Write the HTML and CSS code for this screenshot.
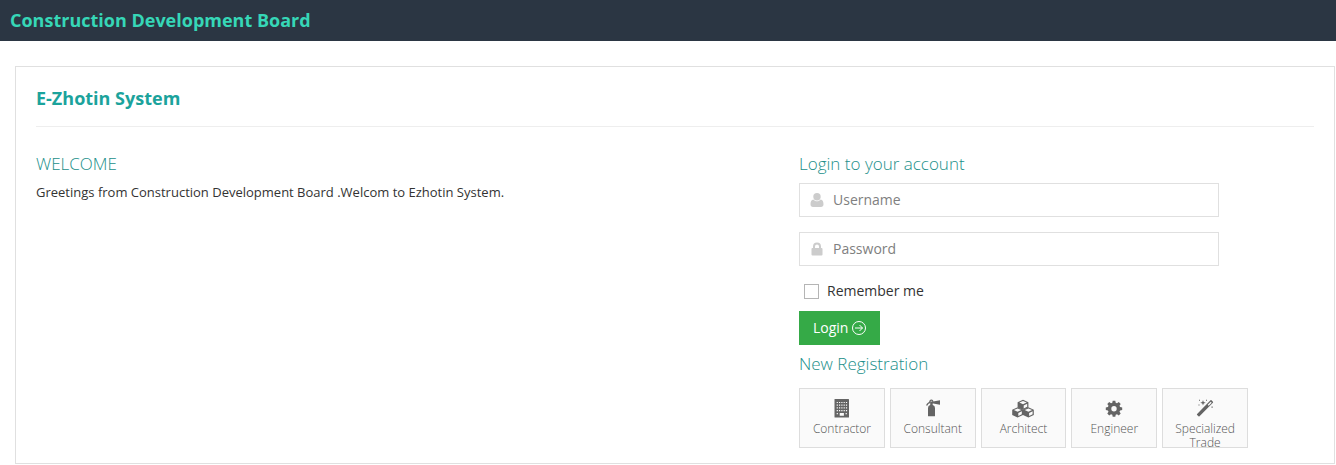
FILE: index.html
```html
<!DOCTYPE html>
<html lang="en">
<head>
<meta charset="utf-8">
<title>E-Zhotin System</title>
<link rel="stylesheet" href="styles.css">
</head>
<body>
<header class="topbar">Construction Development Board</header>
<main class="card">
  <h1 class="card-title">E-Zhotin System</h1>
  <div class="columns">
    <section class="welcome">
      <h2 class="heading">WELCOME</h2>
      <p class="greeting">Greetings from Construction Development Board .Welcom to Ezhotin System.</p>
    </section>
    <section class="account">
      <form class="login">
        <h2 class="heading">Login to your account</h2>
        <label class="field">
          <svg class="field-icon" viewBox="0 0 14 14"><circle cx="7" cy="3.8" r="3.7"/><path d="M3.4 6.4C1.3 6.7.5 8.6.5 11.2.5 13 1.5 14 3 14h8c1.500 0 2.500-1 2.500-2.800 0-2.600-.8-4.500-2.900-4.800C9.700 7.500 8.400 8.200 7 8.200S4.300 7.500 3.400 6.400z"/></svg>
          <input class="input" type="text" placeholder="Username">
        </label>
        <label class="field">
          <svg class="field-icon" viewBox="0 0 14 14"><path fill-rule="evenodd" d="M3 6V4.500a4 4 0 0 1 8 0V6h.6q.9 0 .9.900v5.700q0 .9-.9.900H2.400q-.9 0-.9-.9V6.900Q1.500 6 2.400 6zM5 6h4V4.500a2 2 0 0 0-4 0z"/></svg>
          <input class="input" type="password" placeholder="Password">
        </label>
        <label class="remember"><input class="checkbox" type="checkbox">Remember me</label>
        <button class="login-button" type="button">Login
          <svg class="arrow" viewBox="0 0 14 14"><circle cx="7" cy="7" r="6.500"/><path d="M3 7h7.500M7.500 4l3 3-3 3"/></svg>
        </button>
      </form>
      <h2 class="heading">New Registration</h2>
      <nav class="tiles">
        <a class="tile">
          <svg class="tile-icon" viewBox="0 0 22 19"><path d="M4 0h13.500q.5 0 .5.500v17.500q0 .5-.5.500H4q-.5 0-.5-.5V.5Q3.500 0 4 0z"/><path class="windows" d="M5.700 3.500h10.500M5.700 6.200h10.500M5.700 8.900h10.500M5.700 11.600h10.500"/><path class="face" d="M5.700 14h1.200v1.200H5.700zM14.600 14h1.200v1.200h-1.200zM8.700 14h4.200v2.700H8.700z"/></svg>
          <span>Contractor</span>
        </a>
        <a class="tile">
          <svg class="tile-icon" viewBox="0 0 22 19"><path d="M6 16.800V9q0-2.200 2.200-2.900V4.500h2.500v1.600Q13 6.800 13 9v7.800q0 .5-.5.500h-6q-.5 0-.5-.5zM8.200 2.500h3L18 1.200v4.500L11.200 4.500h-3z"/><path class="stroke" d="M8.500 3.300Q6 3.300 4.600 6.500M8 3.200a1.500 1.500 0 1 1 2.700 0"/></svg>
          <span>Consultant</span>
        </a>
        <a class="tile">
          <svg class="tile-icon" viewBox="0 0 22 19"><g id="cube"><path d="M11 .8 16.400 3.200v5.200L11 11 5.600 8.400V3.200z"/><path class="face" d="m11 2 3.700 1.600L11 5.200 7.300 3.600z"/><path class="face" d="m11.700 6.400 3.500-1.600v3l-3.500 1.700z"/></g><use href="#cube" x="-5.400" y="7.500"/><use href="#cube" x="5.400" y="7.500"/></svg>
          <span>Architect</span>
        </a>
        <a class="tile">
          <svg class="tile-icon" viewBox="0 0 22 19"><path fill-rule="evenodd" d="m9.700 1.700-.4 2-1.300.6-1.800-1.200-1.900 1.900 1.200 1.700-.6 1.300-2.100.4v2.600l2.100.4.600 1.300-1.200 1.800 1.900 1.900L8 15.200l1.300.6.400 2h2.600l.4-2 1.300-.6 1.800 1.200 1.900-1.900-1.200-1.800.6-1.300 2.100-.4V8.400l-2.100-.4-.6-1.300L17.700 5l-1.900-1.900L14 4.300l-1.300-.6-.4-2zM11 7a2.700 2.700 0 1 1 0 5.400A2.700 2.700 0 0 1 11 7z"/></svg>
          <span>Engineer</span>
        </a>
        <a class="tile">
          <svg class="tile-icon" viewBox="0 0 22 19"><path fill-rule="evenodd" d="M3.100 14.900 16.500 1.300q.5-.5 1 0l1.400 1.400q.5.500 0 1L5.500 17.200q-.5.500-1 0l-1.400-1.300q-.5-.5 0-1zM13.700 5.700l1 1 3-3-1-1z"/><path d="m9 1 .7 2 2 .7-2 .7-.7 2-.7-2-2-.7 2-.7zM5 .8h1v1H5zM12 .8h1v1h-1zM4.500 5.500h1v1h-1zM17.500 7.500h1.200v1.200h-1.200z"/></svg>
          <span>Specialized Trade</span>
        </a>
      </nav>
    </section>
  </div>
</main>
</body>
</html>
```
FILE: styles.css
```css
* { box-sizing: border-box; }

body {
  margin: 0;
  background: #fff;
  color: #333;
  font: 13px/20px "Open Sans", sans-serif;
}

.topbar {
  height: 41px;
  padding-left: 10px;
  background: #2b3643;
  color: #36d7b7;
  font-size: 18px;
  font-weight: 700;
  line-height: 41px;
}

.card {
  height: 398px;
  margin: 25px 1px 0 15px;
  padding: 0 20px;
  border: 1px solid #e0e0e0;
}

.card-title {
  height: 60px;
  margin: 0;
  border-bottom: 1px solid #eee;
  color: #1ba39c;
  font-size: 18px;
  font-weight: 700;
  line-height: 63px;
}

.columns {
  display: grid;
  grid-template-columns: 763px 449px;
  padding-top: 25px;
}

.heading {
  height: 24px;
  margin: 0;
  color: #1b8f8a;
  font-size: 17px;
  font-weight: 300;
  line-height: 24px;
}

.greeting { margin: 6px 0 0; }

.login { margin: 0 0 7px; }

.field {
  display: flex;
  align-items: center;
  width: 420px;
  height: 34px;
  margin: 7px 0 15px;
  padding-left: 10px;
  border: 1px solid #e0e0e0;
}

.field + .field { margin-top: 0; }

.field-icon {
  width: 14px;
  height: 14px;
  margin-right: 9px;
  fill: #ccc;
}

.input {
  flex: 1;
  min-width: 0;
  padding: 0;
  border: 0;
  outline: 0;
  font: 14px/20px "Open Sans", sans-serif;
}

.input::placeholder { color: #808080; }

.remember {
  display: flex;
  align-items: center;
  height: 20px;
  padding-left: 5px;
  font-size: 14px;
}

.checkbox {
  appearance: none;
  width: 15px;
  height: 15px;
  margin: 1px 8px 0 0;
  border: 1px solid #b5b5b5;
}

.login-button {
  display: flex;
  align-items: center;
  gap: 4px;
  width: 81px;
  height: 34px;
  margin-top: 10px;
  padding: 0 0 0 14px;
  border: 0;
  background: #35aa47;
  color: #fff;
  font: 14px/20px "Open Sans", sans-serif;
}

.arrow {
  width: 14px;
  height: 14px;
  fill: none;
  stroke: #fff;
}

.tiles {
  display: grid;
  grid-template-columns: repeat(5, 1fr);
  gap: 5px;
  margin-top: 12px;
}

.tile {
  height: 60px;
  padding: 10px 6px 0;
  overflow: hidden;
  border: 1px solid #ddd;
  background: #fafafa;
  color: #555;
  font-size: 12px;
  font-weight: 300;
  line-height: 14px;
  text-align: center;
}

.tile-icon {
  display: block;
  width: 22px;
  height: 19px;
  margin: 0 auto 4px;
  fill: #646464;
}

.tile .stroke { fill: none; stroke: #646464; stroke-width: 1.2; }
.tile .windows { stroke: #fafafa; stroke-width: 1.2; stroke-dasharray: 1.2 1.1; }
.tile .face { fill: #fafafa; }
```
